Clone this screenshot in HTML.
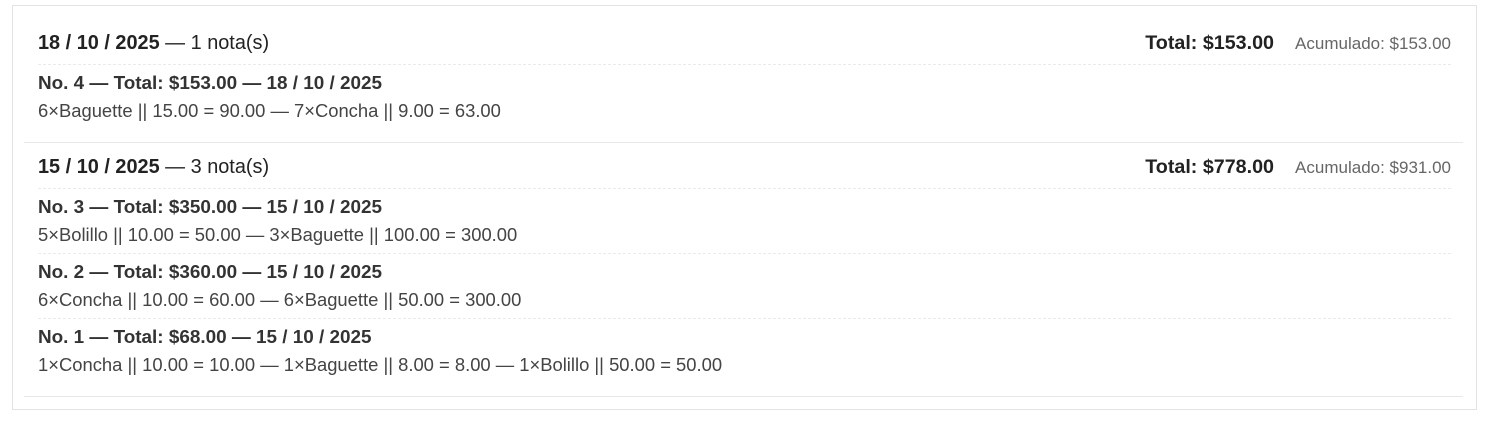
<!DOCTYPE html>
<html><head><meta charset="utf-8"><style>
body{margin:0;width:1489px;height:423px;background:#fff;font-family:"Liberation Sans",Arial,sans-serif;color:#222;position:relative;overflow:hidden}
.box{position:absolute;left:12px;top:5px;width:1463px;height:403px;border:1px solid #e3e3e3}
.a{position:absolute;white-space:nowrap}
.h{font-size:19.9px;color:#222;line-height:22px}
.t{font-size:18.9px;font-weight:bold;color:#333;line-height:22px}
.d{font-size:18.4px;color:#444;line-height:20px}
.tot{font-size:19.7px;font-weight:bold;color:#222;line-height:22px}
.acc{font-size:17px;color:#666;line-height:20px}
.dash{position:absolute;left:38px;width:1413px;border-top:1px dashed #eaeaea;height:0}
.sol{position:absolute;left:24px;width:1439px;border-top:1px solid #e8e8e8;height:0}
</style></head><body>
<div class="box"></div>
<div class="a h" style="left:38px;top:32px"><b>18 / 10 / 2025</b> — 1 nota(s)</div>
<div class="a tot" style="right:215px;top:32px">Total: $153.00</div>
<div class="a acc" style="right:38px;top:34px">Acumulado: $153.00</div>
<div class="dash" style="top:64px"></div>
<div class="a t" style="left:38px;top:73px">No. 4 — Total: $153.00 — 18 / 10 / 2025</div>
<div class="a d" style="left:38px;top:101px">6×Baguette || 15.00 = 90.00 — 7×Concha || 9.00 = 63.00</div>
<div class="sol" style="top:142px"></div>
<div class="a h" style="left:38px;top:156px"><b>15 / 10 / 2025</b> — 3 nota(s)</div>
<div class="a tot" style="right:215px;top:156px">Total: $778.00</div>
<div class="a acc" style="right:38px;top:158px">Acumulado: $931.00</div>
<div class="dash" style="top:188px"></div>
<div class="a t" style="left:38px;top:197px">No. 3 — Total: $350.00 — 15 / 10 / 2025</div>
<div class="a d" style="left:38px;top:225px">5×Bolillo || 10.00 = 50.00 — 3×Baguette || 100.00 = 300.00</div>
<div class="dash" style="top:253px"></div>
<div class="a t" style="left:38px;top:262px">No. 2 — Total: $360.00 — 15 / 10 / 2025</div>
<div class="a d" style="left:38px;top:290px">6×Concha || 10.00 = 60.00 — 6×Baguette || 50.00 = 300.00</div>
<div class="dash" style="top:318px"></div>
<div class="a t" style="left:38px;top:327px">No. 1 — Total: $68.00 — 15 / 10 / 2025</div>
<div class="a d" style="left:38px;top:355px">1×Concha || 10.00 = 10.00 — 1×Baguette || 8.00 = 8.00 — 1×Bolillo || 50.00 = 50.00</div>
<div class="sol" style="top:396px"></div>
</body></html>
